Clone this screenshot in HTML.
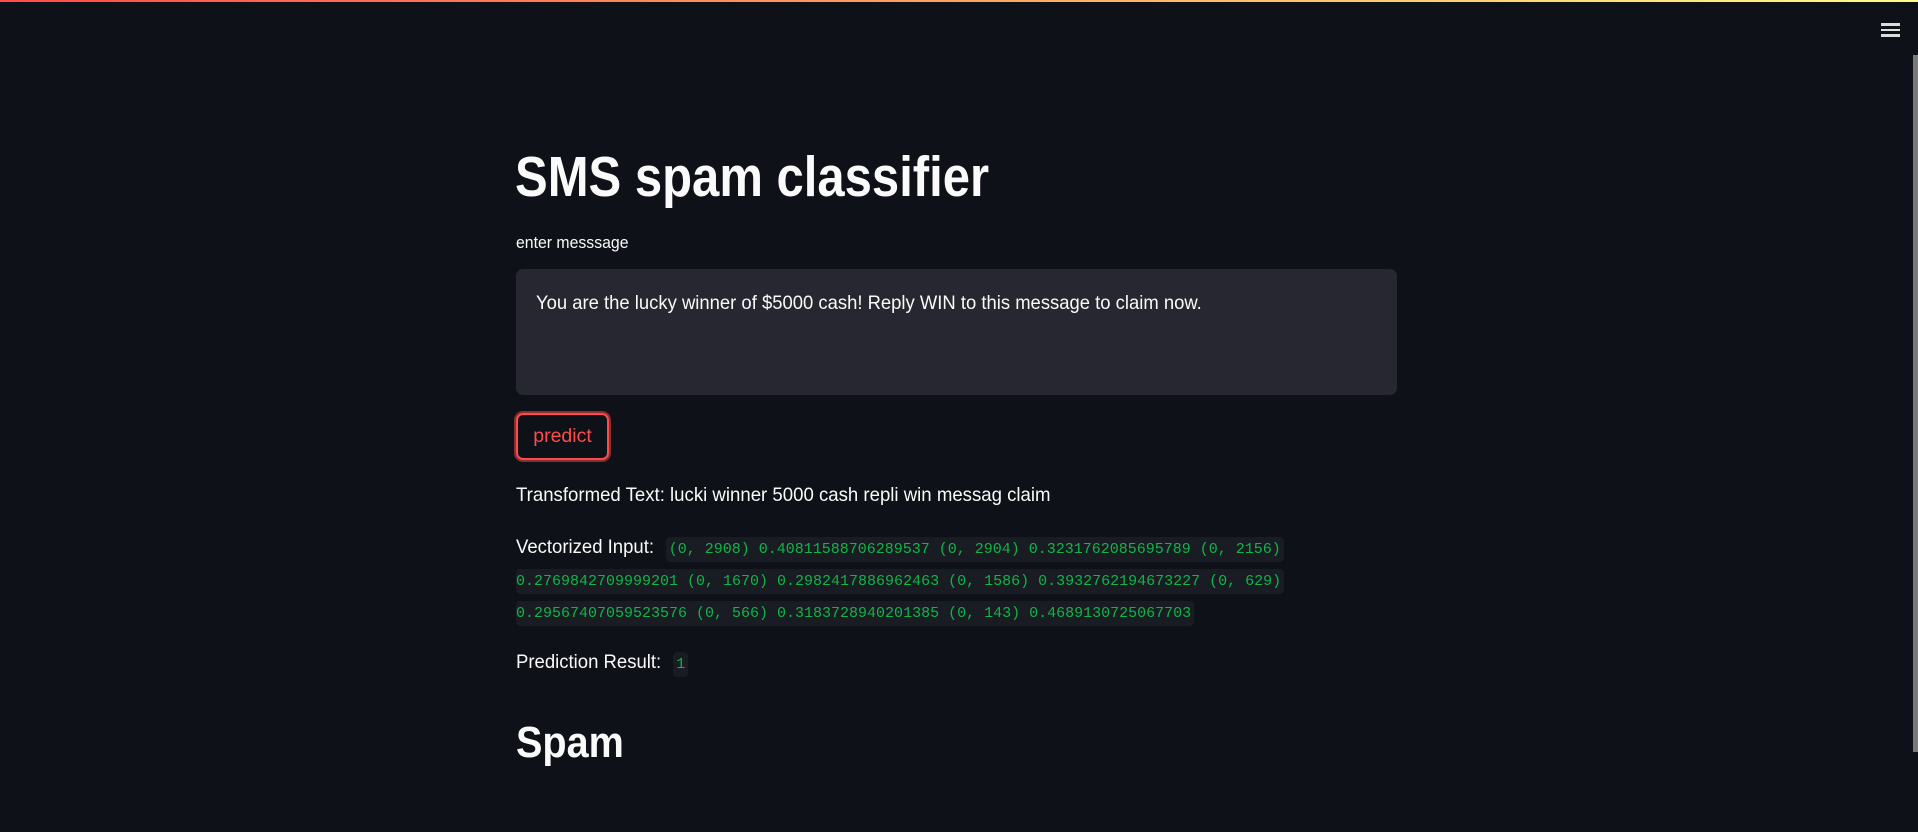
<!DOCTYPE html>
<html><head><meta charset="utf-8"><style>
*{margin:0;padding:0;box-sizing:border-box}
html,body{width:1918px;height:832px;overflow:hidden;background:#0e1117;color:#fafafa;font-family:"Liberation Sans",sans-serif}
.topbar{position:absolute;left:0;top:0;width:1918px;height:2px;background:linear-gradient(90deg,#ff4b4b,#fffd80)}
.abs{position:absolute;white-space:nowrap;transform-origin:left center}
h1{position:absolute;left:515px;top:142px;font-size:57px;font-weight:bold;line-height:70px;white-space:nowrap;transform:scaleX(.86);transform-origin:left center}
.lbl{left:516px;top:233px;font-size:17px;transform:scaleX(.93)}
.ta{position:absolute;left:516px;top:269px;width:881px;height:126px;background:#262730;border-radius:7px}
.ta span{position:absolute;left:20px;top:23px;font-size:19.5px;white-space:nowrap;transform:scaleX(.946);transform-origin:left center}
.btn{position:absolute;left:516px;top:413px;width:93px;height:47px;border:2px solid #ff4b4b;border-radius:7px;box-shadow:0 0 0 2px rgba(255,75,75,.5);color:#ff4b4b;font-size:19.5px;text-align:center;line-height:42px}
.t{font-size:19.5px}
code{font-family:"Liberation Mono",monospace;font-size:15px;color:#0fb545;background:#1a1c24;padding:4px 3px;border-radius:4px}
.spam{left:516px;top:718px;font-size:44px;font-weight:bold;transform:scaleX(.9)}
.hb{position:absolute;left:1881px;width:19px;height:2.5px;background:#ddd}
.sb{position:absolute;left:1913px;top:55px;width:5px;height:697px;background:#7a7a7a}
.lab{display:inline-block;transform:scaleX(.95);transform-origin:left center;margin-right:-1px}
</style></head><body>
<div class="topbar"></div>
<div class="hb" style="top:23px"></div><div class="hb" style="top:28.5px"></div><div class="hb" style="top:34px"></div>
<div class="sb"></div>
<h1>SMS spam classifier</h1>
<div class="abs lbl">enter messsage</div>
<div class="ta"><span>You are the lucky winner of $5000 cash! Reply WIN to this message to claim now.</span></div>
<div class="btn">predict</div>
<div class="abs t" style="left:516px;top:484px;transform:scaleX(.954)">Transformed Text: lucki winner 5000 cash repli win messag claim</div>
<div class="abs t" style="left:516px;top:536px"><span class="lab">Vectorized Input:</span> <code>(0, 2908) 0.40811588706289537 (0, 2904) 0.3231762085695789 (0, 2156)</code></div>
<div class="abs" style="left:516px;top:572px"><code style="padding-left:0">0.2769842709999201 (0, 1670) 0.2982417886962463 (0, 1586) 0.3932762194673227 (0, 629)</code></div>
<div class="abs" style="left:516px;top:604px"><code style="padding-left:0">0.29567407059523576 (0, 566) 0.3183728940201385 (0, 143) 0.4689130725067703</code></div>
<div class="abs t" style="left:516px;top:651px"><span class="lab">Prediction Result:</span> <code>1</code></div>
<div class="abs spam">Spam</div>
</body></html>
